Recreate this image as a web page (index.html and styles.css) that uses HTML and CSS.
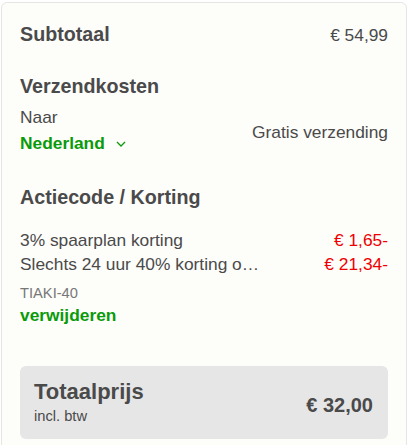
FILE: index.html
```html
<!DOCTYPE html>
<html lang="nl">
<head>
<meta charset="utf-8">
<title>Overzicht</title>
<link rel="stylesheet" href="styles.css">
</head>
<body>
<div class="card">
  <div class="row subtotal">
    <div class="heading">Subtotaal</div>
    <div class="value">€ 54,99</div>
  </div>

  <div class="heading shipping-title">Verzendkosten</div>
  <div class="row shipping">
    <div class="ship-left">
      <div class="line">Naar</div>
      <div class="line country">Nederland <svg class="chev" width="10" height="6" viewBox="0 0 10 6"><polyline points="1,1 5,5 9,1" fill="none" stroke="#0a9a0a" stroke-width="1.3"/></svg></div>
    </div>
    <div class="ship-right">Gratis verzending</div>
  </div>

  <div class="heading promo-title">Actiecode / Korting</div>
  <div class="discounts">
    <div class="row disc">
      <div class="disc-label">3% spaarplan korting</div>
      <div class="disc-amount">€ 1,65-</div>
    </div>
    <div class="row disc">
      <div class="disc-label">Slechts 24 uur 40% korting o…</div>
      <div class="disc-amount">€ 21,34-</div>
    </div>
  </div>
  <div class="code">TIAKI-40</div>
  <div class="remove">verwijderen</div>

  <div class="total">
    <div class="total-left">
      <div class="total-title">Totaalprijs</div>
      <div class="total-sub">incl. btw</div>
    </div>
    <div class="total-value">€ 32,00</div>
  </div>
</div>
</body>
</html>
```

FILE: styles.css
```css
html, body {
  margin: 0;
  padding: 0;
  background: #ffffff;
}
body {
  font-family: "Liberation Sans", Arial, sans-serif;
  color: #4a4a4a;
  padding: 2px 0 0 1px;
}
.card {
  width: 406px;
  box-sizing: border-box;
  background: #fdfdfa;
  border: 1px solid #e6e6e4;
  border-radius: 6px;
  padding: 19px 18px 40px 18px;
}
.row {
  display: flex;
  justify-content: space-between;
}
.heading {
  font-size: 19.7px;
  font-weight: bold;
  line-height: 24px;
}
.subtotal {
  align-items: baseline;
}
.value {
  font-size: 17.35px;
  line-height: 24px;
}
.shipping-title {
  margin-top: 27px;
}
.shipping {
  margin-top: 6px;
  align-items: flex-start;
}
.line {
  font-size: 17.35px;
  line-height: 26px;
}
.country {
  color: #0a9a0a;
  font-weight: bold;
}
.chev {
  margin-left: 6px;
  vertical-align: 2px;
}
.ship-right {
  font-size: 17.35px;
  line-height: 26px;
  padding-top: 15px;
}
.promo-title {
  margin-top: 29px;
}
.discounts {
  margin-top: 19px;
}
.disc {
  font-size: 17.35px;
  line-height: 24.3px;
  gap: 16px;
}
.disc-label {
  flex: 1;
  min-width: 0;
  white-space: nowrap;
  overflow: hidden;
  text-overflow: ellipsis;
}
.disc-amount {
  color: #f00000;
  white-space: nowrap;
}
.code {
  margin-top: 7px;
  font-size: 14.7px;
  line-height: 18px;
  color: #777777;
}
.remove {
  margin-top: 2px;
  font-size: 17.35px;
  line-height: 22px;
  font-weight: bold;
  color: #0a9a0a;
}
.total {
  margin-top: 40px;
  background: #e6e6e6;
  border-radius: 6px;
  padding: 13px 15px 11px 14px;
  display: flex;
  justify-content: space-between;
  align-items: center;
}
.total-title {
  font-size: 22px;
  font-weight: bold;
  line-height: 26px;
}
.total-sub {
  font-size: 14.7px;
  line-height: 23px;
}
.total-value {
  font-size: 20px;
  font-weight: bold;
  line-height: 24px;
  margin-top: 3px;
}
```
